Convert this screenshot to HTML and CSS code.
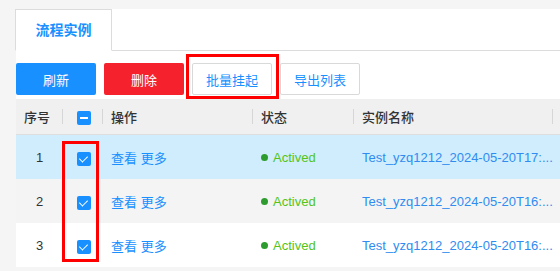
FILE: index.html
```html
<!DOCTYPE html>
<html lang="zh-CN">
<head>
  <meta charset="UTF-8" />
  <meta name="viewport" content="width=device-width, initial-scale=1.0" />
  <title>流程实例</title>
  <link rel="stylesheet" href="styles.css">
</head>
<body>
  <div class="page">
    <div class="tabs">
      <div class="tab active">流程实例</div>
    </div>

    <div class="toolbar">
      <button class="btn btn-primary">刷新</button>
      <button class="btn btn-danger">删除</button>
      <button class="btn btn-default">批量挂起</button>
      <button class="btn btn-default">导出列表</button>
    </div>

    <table class="grid">
      <colgroup>
        <col class="col-index">
        <col class="col-check">
        <col class="col-action">
        <col class="col-status">
        <col class="col-name">
        <col class="col-rest">
      </colgroup>
      <thead>
        <tr>
          <th class="sep">序号</th>
          <th class="sep center"><span class="checkbox partial"></span></th>
          <th class="sep">操作</th>
          <th class="sep">状态</th>
          <th class="sep">实例名称</th>
          <th></th>
        </tr>
      </thead>
      <tbody>
        <tr class="selected">
          <td class="center">1</td>
          <td class="center"><span class="checkbox checked"></span></td>
          <td><a class="link">查看</a> <a class="link">更多</a></td>
          <td><span class="status"><i class="dot"></i>Actived</span></td>
          <td class="name"><a class="link">Test_yzq1212_2024-05-20T17:...</a></td>
          <td></td>
        </tr>
        <tr class="striped">
          <td class="center">2</td>
          <td class="center"><span class="checkbox checked"></span></td>
          <td><a class="link">查看</a> <a class="link">更多</a></td>
          <td><span class="status"><i class="dot"></i>Actived</span></td>
          <td class="name"><a class="link">Test_yzq1212_2024-05-20T16:...</a></td>
          <td></td>
        </tr>
        <tr>
          <td class="center">3</td>
          <td class="center"><span class="checkbox checked"></span></td>
          <td><a class="link">查看</a> <a class="link">更多</a></td>
          <td><span class="status"><i class="dot"></i>Actived</span></td>
          <td class="name"><a class="link">Test_yzq1212_2024-05-20T16:...</a></td>
          <td></td>
        </tr>
      </tbody>
    </table>
  </div>

  <!-- annotation boxes -->
  <div class="mark mark-button"></div>
  <div class="mark mark-checks"></div>
</body>
</html>
```

FILE: styles.css
```css
html, body {
  margin: 0;
  height: 100%;
}
body {
  font-family: 'Liberation Sans', 'Noto Sans CJK SC', sans-serif;
  font-size: 13px;
  color: #333;
  background-color: #f5f5f5;
  overflow: hidden;
  position: relative;
}
.page {
  margin: 9px 0 0 16px;
  background: #fff;
  width: 720px;
}
.tabs {
  display: flex;
  height: 40px;
  border-top: 1px solid transparent;
  border-bottom: 1px solid #dcdcdc;
}
.tab {
  width: 95px;
  height: 40px;
  margin: -1px 0 0 -1px;
  border: 1px solid #dcdcdc;
  border-bottom-color: #fff;
  line-height: 40px;
  text-align: center;
  font-size: 14px;
  font-weight: 700;
  color: #1890ff;
}
.toolbar {
  display: flex;
  gap: 8px;
  padding: 12px 0 4px;
}
.btn {
  width: 80px;
  height: 32px;
  padding: 0;
  border: 1px solid transparent;
  border-radius: 2px;
  font-family: inherit;
  font-size: 13px;
  cursor: pointer;
}
.btn-primary {
  background-color: #1890ff;
  color: #fff;
}
.btn-danger {
  background-color: #f5222d;
  color: #fff;
}
.btn-default {
  background-color: #fff;
  border-color: #d9d9d9;
  color: #1890ff;
}
.grid {
  border-collapse: collapse;
  table-layout: fixed;
  width: 720px;
}
.col-index { width: 47px; }
.col-check { width: 40px; }
.col-action { width: 150px; }
.col-status { width: 101px; }
.col-name { width: 199px; }
.grid th {
  height: 35px;
  padding: 0 8px;
  background-color: #f0f0f0;
  border-bottom: 1px solid #dedede;
  text-align: left;
  font-weight: 500;
  color: #333;
  position: relative;
}
.grid th.sep::after {
  content: '';
  position: absolute;
  right: 0;
  top: 10px;
  height: 15px;
  border-right: 1px solid #d6d6d6;
}
.grid td {
  height: 44px;
  padding: 0 8px;
  white-space: nowrap;
}
.grid .center {
  text-align: center;
  padding: 0;
}
.grid tr.selected td {
  background-color: #d0edfd;
}
.grid tr.striped td {
  background-color: #f4f4f4;
}
.name {
  overflow: hidden;
}
.link {
  color: #1890ff;
  cursor: pointer;
}
.name .link {
  color: #2f8cf0;
}
.checkbox {
  display: inline-block;
  width: 14px;
  height: 14px;
  border-radius: 2px;
  background-color: #1890ff;
  vertical-align: middle;
  position: relative;
  top: 1px;
  left: 1px;
}
.checkbox.partial::after {
  content: '';
  position: absolute;
  left: 3px;
  top: 6px;
  width: 8px;
  height: 2px;
  background: #fff;
}
.checkbox.checked::after {
  content: '';
  position: absolute;
  left: 4px;
  top: 2px;
  width: 4px;
  height: 7px;
  border: solid #fff;
  border-width: 0 1px 1px 0;
  transform: rotate(45deg);
}
.status {
  color: #52c41a;
}
.dot {
  display: inline-block;
  width: 7px;
  height: 7px;
  margin-right: 5px;
  border-radius: 50%;
  background-color: #2e9b2e;
  vertical-align: 1px;
}
.mark {
  position: absolute;
  border: 3px solid #f00;
  box-sizing: border-box;
}
.mark-button {
  left: 186px;
  top: 54px;
  width: 93px;
  height: 45px;
}
.mark-checks {
  left: 62px;
  top: 141px;
  width: 37px;
  height: 121px;
}
```
